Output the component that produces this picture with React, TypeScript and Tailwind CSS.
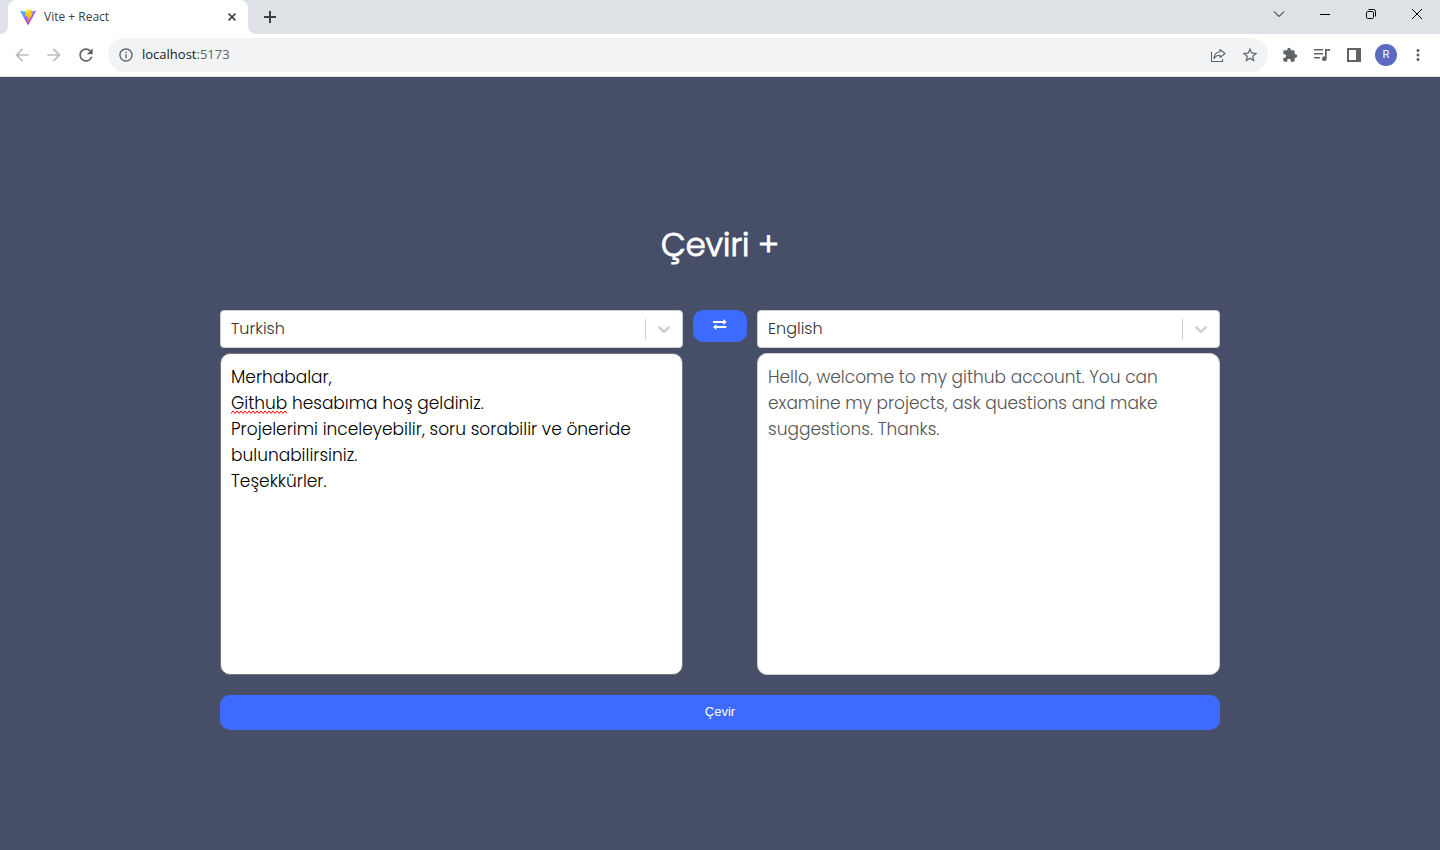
import { useState, type ReactNode } from "react";
import {
  MdArrowBack,
  MdArrowForward,
  MdExtension,
  MdMoreVert,
  MdOutlineInfo,
  MdRefresh,
  MdStarBorder,
} from "react-icons/md";

const SOURCE_TEXT =
  "Merhabalar,\nGithub hesabıma hoş geldiniz.\nProjelerimi inceleyebilir, soru sorabilir ve öneride bulunabilirsiniz.\nTeşekkürler.";
const RESULT_TEXT =
  "Hello, welcome to my github account. You can examine my projects, ask questions and make suggestions. Thanks.";

function ViteLogo() {
  return (
    <svg viewBox="0 0 256 257" className="size-4 shrink-0" aria-hidden="true">
      <defs>
        <linearGradient id="vite-body" x1="-.8%" x2="57.6%" y1="7.7%" y2="78.4%">
          <stop offset="0%" stopColor="#41D1FF" />
          <stop offset="100%" stopColor="#BD34FE" />
        </linearGradient>
        <linearGradient id="vite-bolt" x1="43.4%" x2="50.3%" y1="2.2%" y2="89%">
          <stop offset="0%" stopColor="#FFEA83" />
          <stop offset="8.3%" stopColor="#FFDD35" />
          <stop offset="100%" stopColor="#FFA800" />
        </linearGradient>
      </defs>
      <path
        fill="url(#vite-body)"
        d="M255.153 37.938L134.897 252.976c-2.483 4.44-8.862 4.466-11.382.048L.875 37.958c-2.746-4.814 1.371-10.646 6.827-9.67l120.385 21.517a6.537 6.537 0 0 0 2.322-.004l117.867-21.483c5.438-.991 9.574 4.796 6.877 9.62Z"
      />
      <path
        fill="url(#vite-bolt)"
        d="M185.432.063L96.44 17.501a3.268 3.268 0 0 0-2.634 3.014l-5.474 92.456a3.268 3.268 0 0 0 3.997 3.378l24.777-5.718c2.318-.535 4.413 1.507 3.936 3.838l-7.361 36.047c-.495 2.426 1.782 4.5 4.151 3.78l15.304-4.649c2.372-.72 4.652 1.36 4.15 3.788l-11.698 56.621c-.732 3.542 3.979 5.473 5.943 2.437l1.313-2.028l72.516-144.72c1.215-2.423-.88-5.186-3.54-4.672l-25.505 4.922c-2.396.462-4.435-1.77-3.759-4.114l16.646-57.705c.677-2.35-1.37-4.583-3.769-4.113Z"
      />
    </svg>
  );
}

function IconButton({ label, children }: { label: string; children: ReactNode }) {
  return (
    <button
      type="button"
      aria-label={label}
      className="flex size-8 shrink-0 items-center justify-center text-[#5f6368]"
    >
      {children}
    </button>
  );
}

function WindowButton({ label, children }: { label: string; children: ReactNode }) {
  return (
    <button
      type="button"
      aria-label={label}
      className="flex h-7 w-[46px] items-center justify-center text-black"
    >
      <svg viewBox="0 0 12 12" className="size-3" fill="none" stroke="currentColor" strokeWidth="1">
        {children}
      </svg>
    </button>
  );
}

function TabStrip() {
  return (
    <div className="flex h-[34px] items-start bg-[#dee1e6]">
      <div className="flex h-full w-2 bg-white">
        <div className="w-full rounded-br-lg bg-[#dee1e6]" />
      </div>
      <div className="flex h-full w-60 items-center gap-2 rounded-t-lg bg-white pr-2 pl-3">
        <ViteLogo />
        <span className="flex-1 font-['Open_Sans',sans-serif] text-xs text-[#3c4043]">
          Vite + React
        </span>
        <button
          type="button"
          aria-label="Close tab"
          className="flex size-4 items-center justify-center text-[#3c4043]"
        >
          <svg viewBox="0 0 8 8" className="size-2" stroke="currentColor" strokeWidth="1.6">
            <path d="M.6.6l6.800 6.800M7.400.6L.6 7.400" />
          </svg>
        </button>
      </div>
      <div className="flex h-full w-2 bg-white">
        <div className="w-full rounded-bl-lg bg-[#dee1e6]" />
      </div>
      <button
        type="button"
        aria-label="New tab"
        className="flex h-[34px] w-7 items-center justify-center text-[#3c4043]"
      >
        <svg viewBox="0 0 12 12" className="size-3" stroke="currentColor" strokeWidth="2">
          <path d="M6 0v12M0 6h12" />
        </svg>
      </button>
      <div className="ml-auto flex">
        <WindowButton label="Search tabs">
          <path d="M1 3.5l5 5 5-5" />
        </WindowButton>
        <WindowButton label="Minimize">
          <path d="M1 6.5h10" />
        </WindowButton>
        <WindowButton label="Restore">
          <rect x="1.5" y="3.5" width="7" height="7" rx="1.2" />
          <path d="M3.5 1.5h5a2 2 0 0 1 2 2v5" />
        </WindowButton>
        <WindowButton label="Close">
          <path d="M1 1l10 10M11 1L1 11" />
        </WindowButton>
      </div>
    </div>
  );
}

function Toolbar() {
  return (
    <div className="flex h-[43px] items-center border-b border-[#dde1dc] bg-white pr-1.5 pl-1.5">
      <button type="button" aria-label="Back" disabled className="flex size-8 items-center justify-center text-[#babcbe]">
        <MdArrowBack className="size-5" />
      </button>
      <button type="button" aria-label="Forward" disabled className="flex size-8 items-center justify-center text-[#babcbe]">
        <MdArrowForward className="size-5" />
      </button>
      <IconButton label="Reload">
        <MdRefresh className="size-5" />
      </IconButton>
      <div className="ml-1.5 flex h-[34px] flex-1 items-center rounded-full bg-[#f1f3f4] pl-2.5 pr-0.5">
        <MdOutlineInfo className="size-4 shrink-0 text-[#5f6368]" />
        <a
          href="http://localhost:5173"
          className="ml-2 flex-1 font-['Open_Sans',sans-serif] text-[13px] text-[#202124]"
        >
          localhost<span className="text-[#5f6368]">:5173</span>
        </a>
        <IconButton label="Share">
          <svg viewBox="0 0 16 16" className="size-4" fill="none" stroke="currentColor" strokeWidth="1.1">
            <path d="M1.500 5v9.500h11V12" />
            <path strokeLinejoin="round" d="M10 2.500l5 4-5 4V8.300C7.400 8.300 5.500 9.200 4 11.500 4.300 7.700 6.500 5 10 4.700z" />
          </svg>
        </IconButton>
        <IconButton label="Bookmark this page">
          <MdStarBorder className="size-[18px]" />
        </IconButton>
      </div>
      <div className="ml-1.5 flex items-center">
        <IconButton label="Extensions">
          <MdExtension className="size-4" />
        </IconButton>
        <IconButton label="Media controls">
          <svg viewBox="0 0 16 14" className="h-3.5 w-4" fill="currentColor">
            <path d="M0 1h9v1.600H0zM0 5h9v1.600H0zM0 9h6v1.600H0z" />
            <path d="M11 1h5v1.700h-3.300v8a2.300 2.300 0 1 1-1.700-2.200z" />
          </svg>
        </IconButton>
        <IconButton label="Side panel">
          <svg viewBox="0 0 14 14" className="size-3.5" fill="currentColor">
            <path fillRule="evenodd" d="M0 0h14v14H0zM2 2v10h7V2z" />
          </svg>
        </IconButton>
        <IconButton label="Profile">
          <span className="flex size-[22px] items-center justify-center rounded-full bg-[#5c6bc0] font-[Roboto,sans-serif] text-[11px] text-white">
            R
          </span>
        </IconButton>
        <IconButton label="Menu">
          <MdMoreVert className="size-[18px]" />
        </IconButton>
      </div>
    </div>
  );
}

interface LanguageSelectProps {
  label: string;
  value: string;
  onChange: (value: string) => void;
}

function LanguageSelect({ label, value, onChange }: LanguageSelectProps) {
  return (
    <div className="relative">
      <select
        aria-label={label}
        value={value}
        onChange={(event) => onChange(event.target.value)}
        className="block h-[38px] w-full appearance-none rounded border border-[#cccccc] bg-white pr-12 pl-2.5 text-base font-light text-[#333333]"
      >
        <option>Turkish</option>
        <option>English</option>
      </select>
      <div className="pointer-events-none absolute inset-y-0 right-0 flex items-center pr-px text-[#cccccc]">
        <span className="h-5 w-px bg-[#cccccc]" />
        <svg viewBox="0 0 20 20" className="mx-2 size-5" fill="currentColor" aria-hidden="true">
          <path d="M4.516 7.548c0.436-0.446 1.043-0.481 1.576 0l3.908 3.747 3.908-3.747c0.533-0.481 1.141-0.446 1.574 0 0.436 0.445 0.408 1.197 0 1.615-0.406 0.418-4.695 4.502-4.695 4.502-0.217 0.223-0.502 0.335-0.787 0.335s-0.570-0.112-0.789-0.335c0 0-4.287-4.084-4.695-4.502s-0.436-1.170 0-1.615z" />
        </svg>
      </div>
    </div>
  );
}

function SpellingMark() {
  return (
    <svg className="pointer-events-none absolute top-[57px] left-[11px] h-[5px] w-14" aria-hidden="true">
      <defs>
        <pattern id="squiggle" width="4" height="5" patternUnits="userSpaceOnUse">
          <path d="M-1 2.500L0 3.500l2-2.500 2 2.500 1-1" fill="none" stroke="#ff0000" strokeWidth="1" />
        </pattern>
      </defs>
      <rect width="100%" height="5" fill="url(#squiggle)" />
    </svg>
  );
}

export default function App() {
  const [from, setFrom] = useState("Turkish");
  const [to, setTo] = useState("English");
  const [text, setText] = useState(SOURCE_TEXT);

  const swap = () => {
    setFrom(to);
    setTo(from);
  };

  return (
    <div className="flex min-h-screen flex-col bg-[#474e68] font-[Poppins,Inter,sans-serif]">
      <header>
        <TabStrip />
        <Toolbar />
      </header>
      <main className="flex flex-1 flex-col justify-center px-5">
        <div className="mx-auto w-full max-w-[1000px]">
          <h1 className="mt-6 mb-[42px] text-center text-[32px] leading-[46px] font-light text-white [-webkit-text-stroke:1px_white]">
            Çeviri +
          </h1>
          <div className="flex items-start gap-2.5">
            <div className="flex min-w-0 flex-1 flex-col gap-[5px]">
              <LanguageSelect label="Source language" value={from} onChange={setFrom} />
              <div className="relative">
                <textarea
                  aria-label="Text to translate"
                  value={text}
                  onChange={(event) => setText(event.target.value)}
                  spellCheck={false}
                  className="block h-[322px] w-full resize-none rounded-[10px] border border-[#767676] bg-white p-2.5 text-[17px] leading-[26px] font-light text-black"
                />
                {text === SOURCE_TEXT && <SpellingMark />}
              </div>
            </div>
            <button
              type="button"
              aria-label="Swap languages"
              onClick={swap}
              className="flex h-8 items-start rounded-[10px] bg-[#3d6aff] px-5 pt-2 text-white"
            >
              <svg viewBox="0 0 14 14" className="size-3.5" fill="currentColor" aria-hidden="true">
                <path d="M0 3h10.300V1L13.700 4l-3.400 3V5H0zM13.300 10H3.400v2L0 9l3.400-3v2h9.900z" />
              </svg>
            </button>
            <div className="flex min-w-0 flex-1 flex-col gap-[5px]">
              <LanguageSelect label="Target language" value={to} onChange={setTo} />
              <textarea
                aria-label="Translation"
                value={RESULT_TEXT}
                disabled
                className="block h-[322px] w-full resize-none rounded-[10px] border border-[#d0d0d0] bg-white p-2.5 text-[17px] leading-[26px] font-light text-[#545454]"
              />
            </div>
          </div>
          <button
            type="button"
            className="mt-5 h-[35px] w-full rounded-[10px] bg-[#3d6aff] font-['Liberation_Sans',Arial,sans-serif] text-[13px] text-white"
          >
            Çevir
          </button>
        </div>
      </main>
    </div>
  );
}
